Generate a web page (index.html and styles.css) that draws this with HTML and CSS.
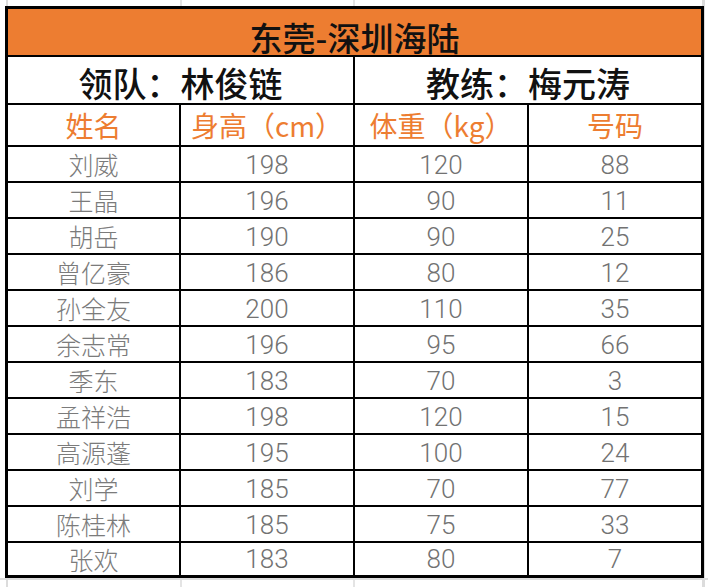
FILE: index.html
```html
<!DOCTYPE html>
<html lang="zh-CN">
<head>
<meta charset="utf-8">
<title>东莞-深圳海陆</title>
<link rel="stylesheet" href="styles.css">
</head>
<body>
<div class="page">
  <div class="sheet">
    <div class="cell title">东莞-深圳海陆</div>
    <div class="cell staff">领队：林俊链</div>
    <div class="cell staff">教练：梅元涛</div>
    <div class="cell head">姓名</div>
    <div class="cell head">身高（cm）</div>
    <div class="cell head">体重（kg）</div>
    <div class="cell head">号码</div>

    <div class="cell data">刘威</div><div class="cell data num">198</div><div class="cell data num">120</div><div class="cell data num">88</div>
    <div class="cell data">王晶</div><div class="cell data num">196</div><div class="cell data num">90</div><div class="cell data num">11</div>
    <div class="cell data">胡岳</div><div class="cell data num">190</div><div class="cell data num">90</div><div class="cell data num">25</div>
    <div class="cell data">曾亿豪</div><div class="cell data num">186</div><div class="cell data num">80</div><div class="cell data num">12</div>
    <div class="cell data">孙全友</div><div class="cell data num">200</div><div class="cell data num">110</div><div class="cell data num">35</div>
    <div class="cell data">余志常</div><div class="cell data num">196</div><div class="cell data num">95</div><div class="cell data num">66</div>
    <div class="cell data">季东</div><div class="cell data num">183</div><div class="cell data num">70</div><div class="cell data num">3</div>
    <div class="cell data">孟祥浩</div><div class="cell data num">198</div><div class="cell data num">120</div><div class="cell data num">15</div>
    <div class="cell data">高源蓬</div><div class="cell data num">195</div><div class="cell data num">100</div><div class="cell data num">24</div>
    <div class="cell data">刘学</div><div class="cell data num">185</div><div class="cell data num">70</div><div class="cell data num">77</div>
    <div class="cell data">陈桂林</div><div class="cell data num">185</div><div class="cell data num">75</div><div class="cell data num">33</div>
    <div class="cell data last">张欢</div><div class="cell data num last">183</div><div class="cell data num last">80</div><div class="cell data num last">7</div>
  </div>
</div>
</body>
</html>
```
FILE: styles.css
```css
html, body {
  margin: 0;
  padding: 0;
  background: #ffffff;
}

.page {
  width: 708px;
  height: 587px;
  box-sizing: border-box;
  padding: 6px 0 0 5px;
  background:
    linear-gradient(#dcdcdc, #dcdcdc) 0 578px / 100% 2px no-repeat,
    linear-gradient(#dcdcdc, #dcdcdc) 6px 0 / 2px 100% no-repeat,
    linear-gradient(#e4e4e4, #e4e4e4) 180px 0 / 2px 100% no-repeat,
    linear-gradient(#e4e4e4, #e4e4e4) 353px 0 / 2px 100% no-repeat,
    linear-gradient(#dcdcdc, #dcdcdc) 702px 0 / 3px 100% no-repeat,
    #ffffff;
  font-family: "Noto Sans CJK SC", "Noto Sans", sans-serif;
}

.sheet {
  display: grid;
  grid-template-columns: 171px 172px 172px 172px;
  grid-template-rows: 46px 46px 40px repeat(11, 34px) 32px;
  gap: 2px;
  padding: 3px;
  background: #000000;
  width: max-content;
}

.cell {
  background: #ffffff;
  display: flex;
  align-items: center;
  justify-content: center;
  white-space: nowrap;
  line-height: 1;
}

.title {
  grid-column: 1 / span 4;
  background: #ed7d31;
  color: #111111;
  font-size: 33px;
  font-weight: 500;
  padding-top: 10px;
  box-sizing: border-box;
}

.staff {
  grid-column: span 2;
  color: #111111;
  font-size: 34px;
  font-weight: 500;
  padding-top: 6px;
  box-sizing: border-box;
}

.head {
  color: #ed7d31;
  font-size: 28px;
  font-weight: 400;
}

.data {
  color: #7b7b7b;
  font-size: 25px;
  font-weight: 300;
  padding-top: 1px;
  box-sizing: border-box;
}

.num {
  font-family: Roboto, "Noto Sans", sans-serif;
  font-size: 26px;
  font-weight: 300;
  color: #727272;
}

.last {
  padding-top: 0;
}
```
